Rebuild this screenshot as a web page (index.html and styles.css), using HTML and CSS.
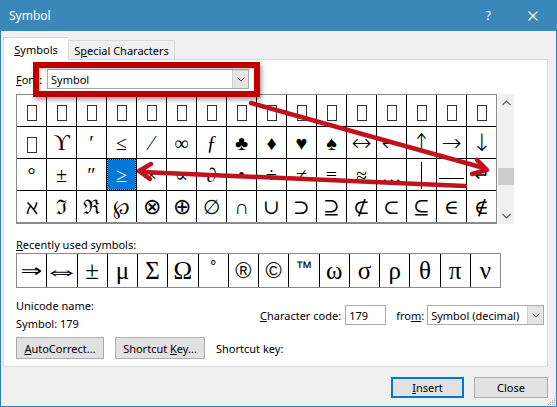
FILE: index.html
```html
<!DOCTYPE html>
<html>
<head>
<meta charset="utf-8">
<title>Symbol</title>
<link rel="stylesheet" href="styles.css">
</head>
<body>
<div class="window">
  <div class="titlebar">
    <span class="title">Symbol</span>
    <span class="help">?</span>
    <span class="close"><svg width="10" height="10" viewBox="0 0 10 10"><path d="M0.5 0.5 L9.5 9.5 M9.5 0.5 L0.5 9.5" stroke="#fff" stroke-width="1.1" fill="none"/></svg></span>
  </div>
  <div class="client">
    <div class="tabs">
      <div class="tab active"><span><u>S</u>ymbols</span></div>
      <div class="tab"><span>S<u>p</u>ecial Characters</span></div>
    </div>
    <div class="panel">
      <div class="font-row">
        <span class="font-label"><u>F</u>ont:</span>
        <div class="combo font-combo">
          <span class="combo-text">Symbol</span>
          <span class="drop"><svg width="8" height="5" viewBox="0 0 8 5"><path d="M0.5 0.5 L4 4 L7.5 0.5" stroke="#555" fill="none"/></svg></span>
        </div>
      </div>
      <div class="grid-wrap">
        <div class="grid">
          <div class="cell"><span class="box"></span></div>
          <div class="cell"><span class="box"></span></div>
          <div class="cell"><span class="box"></span></div>
          <div class="cell"><span class="box"></span></div>
          <div class="cell"><span class="box"></span></div>
          <div class="cell"><span class="box"></span></div>
          <div class="cell"><span class="box"></span></div>
          <div class="cell"><span class="box"></span></div>
          <div class="cell"><span class="box"></span></div>
          <div class="cell"><span class="box"></span></div>
          <div class="cell"><span class="box"></span></div>
          <div class="cell"><span class="box"></span></div>
          <div class="cell"><span class="box"></span></div>
          <div class="cell"><span class="box"></span></div>
          <div class="cell"><span class="box"></span></div>
          <div class="cell"><span class="box"></span></div>

          <div class="cell"><span class="box"></span></div>
          <div class="cell big">ϒ</div>
          <div class="cell">′</div>
          <div class="cell">≤</div>
          <div class="cell">⁄</div>
          <div class="cell">∞</div>
          <div class="cell ital">ƒ</div>
          <div class="cell">♣</div>
          <div class="cell">♦</div>
          <div class="cell">♥</div>
          <div class="cell">♠</div>
          <div class="cell arr">↔</div>
          <div class="cell arr">←</div>
          <div class="cell arr"><span class="up">↑</span></div>
          <div class="cell arr">→</div>
          <div class="cell arr">↓</div>

          <div class="cell">°</div>
          <div class="cell">±</div>
          <div class="cell">″</div>
          <div class="cell selected">≥</div>
          <div class="cell">×</div>
          <div class="cell">∝</div>
          <div class="cell">∂</div>
          <div class="cell">•</div>
          <div class="cell">÷</div>
          <div class="cell">≠</div>
          <div class="cell">≡</div>
          <div class="cell">≈</div>
          <div class="cell">…</div>
          <div class="cell"><span class="vline"></span></div>
          <div class="cell"><span class="hline"></span></div>
          <div class="cell arr ret">↵</div>

          <div class="cell">ℵ</div>
          <div class="cell">ℑ</div>
          <div class="cell">ℜ</div>
          <div class="cell">℘</div>
          <div class="cell thin lg">⊗</div>
          <div class="cell thin lg">⊕</div>
          <div class="cell">∅</div>
          <div class="cell">∩</div>
          <div class="cell">∪</div>
          <div class="cell">⊃</div>
          <div class="cell">⊇</div>
          <div class="cell">⊄</div>
          <div class="cell">⊂</div>
          <div class="cell">⊆</div>
          <div class="cell">∈</div>
          <div class="cell">∉</div>
        </div>
        <div class="scrollbar">
          <span class="sb-arrow"><svg width="9" height="6" viewBox="0 0 9 6"><path d="M0.5 5 L4.5 1 L8.5 5" stroke="#606060" stroke-width="1.2" fill="none"/></svg></span>
          <span class="sb-track"><span class="sb-thumb"></span></span>
          <span class="sb-arrow"><svg width="9" height="6" viewBox="0 0 9 6"><path d="M0.5 1 L4.5 5 L8.5 1" stroke="#606060" stroke-width="1.2" fill="none"/></svg></span>
        </div>
      </div>

      <div class="recent-label"><u>R</u>ecently used symbols:</div>
      <div class="recent">
        <div class="rc"><span class="dbl r">⇒</span></div>
        <div class="rc"><span class="dbl lr">⇔</span></div>
        <div class="rc">±</div>
        <div class="rc">μ</div>
        <div class="rc">Σ</div>
        <div class="rc">Ω</div>
        <div class="rc sans small">°</div>
        <div class="rc sans">®</div>
        <div class="rc sans">©</div>
        <div class="rc sans tm">™</div>
        <div class="rc">ω</div>
        <div class="rc">σ</div>
        <div class="rc">ρ</div>
        <div class="rc">θ</div>
        <div class="rc">π</div>
        <div class="rc">ν</div>
      </div>

      <div class="info">
        <div class="info-left">
          <div>Unicode name:</div>
          <div>Symbol: 179</div>
        </div>
        <div class="code-group">
          <span><u>C</u>haracter code:</span>
          <div class="textbox">179</div>
          <span class="from">fro<u>m</u>:</span>
          <div class="combo from-combo">
            <span class="combo-text">Symbol (decimal)</span>
            <span class="drop"><svg width="8" height="5" viewBox="0 0 8 5"><path d="M0.5 0.5 L4 4 L7.5 0.5" stroke="#555" fill="none"/></svg></span>
          </div>
        </div>
      </div>

      <div class="btn-row">
        <div class="btn autocorrect"><span><u>A</u>utoCorrect...</span></div>
        <div class="btn shortcut"><span>Shortcut <u>K</u>ey...</span></div>
        <span class="sk-label">Shortcut key:</span>
      </div>
    </div>

    <div class="footer">
      <div class="btn insert"><span><u>I</u>nsert</span></div>
      <div class="btn close-btn"><span>Close</span></div>
    </div>
    <svg class="grip" width="10" height="10" viewBox="0 0 10 10">
      <g fill="#a0a0a0"><rect x="8" y="2" width="1" height="1"/><rect x="6" y="4" width="1" height="1"/><rect x="8" y="4" width="1" height="1"/><rect x="4" y="6" width="1" height="1"/><rect x="6" y="6" width="1" height="1"/><rect x="8" y="6" width="1" height="1"/><rect x="2" y="8" width="1" height="1"/><rect x="4" y="8" width="1" height="1"/><rect x="6" y="8" width="1" height="1"/><rect x="8" y="8" width="1" height="1"/></g>
    </svg>
  </div>

  <div class="redbox"></div>
  <svg class="annot" width="557" height="407" viewBox="0 0 557 407">
    <g stroke="#c0121c" stroke-width="4.5" stroke-linecap="round" stroke-linejoin="round" fill="none">
      <line x1="251" y1="103" x2="484" y2="168"/>
      <polyline points="477,160 487,170 472,174"/>
      <line x1="465" y1="186" x2="142" y2="172"/>
      <polyline points="151,164 139,171 150,179"/>
    </g>
  </svg>
</div>
</body>
</html>
```
FILE: styles.css
```css
* { box-sizing: border-box; }
html, body { margin: 0; padding: 0; }
body {
  width: 557px;
  height: 407px;
  overflow: hidden;
  background: #f0f0f0;
  font-family: "Noto Sans", "Open Sans", sans-serif;
  font-size: 11px;
  color: #000;
}
u { text-decoration: underline; text-underline-offset: 1px; }

.window {
  position: relative;
  width: 557px;
  height: 407px;
  display: flex;
  flex-direction: column;
}

.titlebar {
  height: 31px;
  flex: none;
  background: #3a88b9;
  color: #fff;
  display: flex;
  align-items: center;
  padding-left: 9px;
}
.title { font-size: 12px; flex: 1; }
.help { font-size: 12px; margin-right: 37px; }
.close { width: 10px; height: 10px; margin-right: 19px; display: flex; }

.client {
  position: relative;
  flex: 1;
  border: 1px solid #2f7fb3;
  border-top: none;
  background: #f0f0f0;
  padding: 6px 8px 0 2px;
}

.tabs {
  display: flex;
  align-items: flex-end;
  height: 22px;
}
.tab {
  height: 19px;
  width: 107px;
  border: 1px solid #d9d9d9;
  border-bottom: none;
  background: #f0f0f0;
  display: flex;
  align-items: center;
  justify-content: center;
}
.tab.active {
  width: 65px;
  height: 23px;
  margin-bottom: -1px;
  background: #fff;
  position: relative;
  z-index: 1;
  border-right: none;
}

.panel {
  width: 545px;
  height: 308px;
  background: #fff;
  border: 1px solid #d9d9d9;
  padding: 9px 0 0 12px;
}

.font-row {
  display: flex;
  align-items: center;
  height: 20px;
}
.font-label { width: 31px; }
.combo {
  height: 20px;
  border: 1px solid #a9a9a9;
  background: #fff;
  display: flex;
  align-items: stretch;
}
.combo-text {
  flex: 1;
  display: flex;
  align-items: center;
  padding-left: 3px;
}
.drop {
  width: 16px;
  background: #e5e5e5;
  border-left: 1px solid #d0d0d0;
  display: flex;
  align-items: center;
  justify-content: center;
}
.font-combo { width: 202px; }

.grid-wrap {
  display: flex;
  margin-top: 5px;
  height: 130px;
}
.grid {
  display: grid;
  grid-template-columns: repeat(16, 29px);
  grid-template-rows: repeat(4, 31px);
  gap: 1px;
  background: #000;
  border: 1px solid #8a8a8a;
  border-bottom: 2px solid #8a8a8a;
  font-family: "Liberation Serif", "DejaVu Serif", serif;
  font-size: 20px;
}
.cell {
  background: #fff;
  display: flex;
  align-items: center;
  justify-content: center;
  line-height: 1;
}
.cell.ital { font-style: italic; }
.cell.big { font-size: 23px; }
.cell.thin {
  font-family: "DejaVu Sans", sans-serif;
  font-weight: 200;
  font-size: 20px;
}
.cell.thin.lg { font-size: 22px; }
.cell.arr {
  font-family: "DejaVu Sans", sans-serif;
  font-size: 24px;
  font-weight: 200;
}
.cell.ret { font-size: 19px; }
.up {
  display: inline-block;
  font-size: 22px;
  transform: scaleY(1.25);
  margin-top: 3px;
}
.box {
  width: 10px;
  height: 16px;
  border: 1px solid #333;
  margin-top: 5px;
}
.cell.selected {
  background: #0078d7;
  color: #fff;
  outline: 1px dotted #000;
  outline-offset: -1px;
  box-shadow: inset 0 0 0 1px #f0a040;
}
.vline {
  width: 1px;
  height: 27px;
  background: #000;
  margin-top: 2px;
}
.hline {
  width: 25px;
  height: 1px;
  background: #000;
  margin-top: 8px;
}

.scrollbar {
  width: 16px;
  margin-left: 1px;
  height: 130px;
  background: #f0f0f0;
  display: flex;
  flex-direction: column;
}
.sb-arrow {
  height: 17px;
  display: flex;
  align-items: center;
  justify-content: center;
}
.sb-track {
  flex: 1;
  padding-top: 57px;
}
.sb-thumb {
  display: block;
  height: 17px;
  background: #cdcdcd;
}

.recent-label {
  margin-top: 13px;
  height: 15px;
  line-height: 15px;
}
.recent {
  margin-top: 1px;
  display: grid;
  grid-template-columns: repeat(16, 29.25px);
  grid-template-rows: 33px;
  gap: 1px;
  width: 485px;
  background: #000;
  border: 1px solid #8a8a8a;
  font-family: "Liberation Serif", "DejaVu Serif", serif;
  font-size: 25px;
}
.rc {
  background: #fff;
  display: flex;
  align-items: center;
  justify-content: center;
  line-height: 1;
}
.dbl { display: inline-block; }
.dbl.r {
  font-family: "DejaVu Sans", sans-serif;
  font-size: 18px;
  transform: scaleX(1.45);
}
.dbl.lr {
  font-family: "Liberation Serif", serif;
  font-size: 25px;
  transform: scaleX(1.55);
}
.rc.sans { font-family: "Liberation Sans", "DejaVu Sans", sans-serif; font-size: 22px; }
.rc.small { font-size: 16px; padding-bottom: 8px; }
.rc.tm { font-size: 17px; padding-bottom: 6px; }

.info {
  margin-top: 9px;
  display: flex;
  align-items: center;
}
.info-left {
  width: 244px;
  line-height: 18px;
}
.code-group {
  display: flex;
  align-items: center;
}
.textbox {
  width: 41px;
  height: 20px;
  border: 1px solid #a9a9a9;
  margin-left: 4px;
  padding-left: 3px;
  display: flex;
  align-items: center;
}
.from { margin-left: 10px; margin-right: 3px; }
.from-combo { width: 117px; }

.btn-row {
  margin-top: 4px;
  display: flex;
  align-items: center;
  gap: 11px;
}
.btn {
  height: 22px;
  background: #e1e1e1;
  border: 1px solid #adadad;
  display: flex;
  align-items: center;
  justify-content: center;
}
.autocorrect { width: 88px; }
.shortcut { width: 90px; }

.footer {
  margin-top: 10px;
  display: flex;
  justify-content: flex-end;
  gap: 10px;
}
.footer .btn { height: 21px; }
.insert { width: 73px; border: 2px solid #0078d7; }
.close-btn { width: 74px; }

.grip { position: absolute; right: 0; bottom: 0; }

.redbox {
  position: absolute;
  left: 33px;
  top: 62px;
  width: 227px;
  height: 35px;
  border: 6px solid #c00000;
  box-shadow: 2px 3px 4px rgba(0,0,0,0.35), inset 1px 1px 3px rgba(0,0,0,0.25);
}
.annot {
  position: absolute;
  left: 0;
  top: 0;
  pointer-events: none;
}
```
